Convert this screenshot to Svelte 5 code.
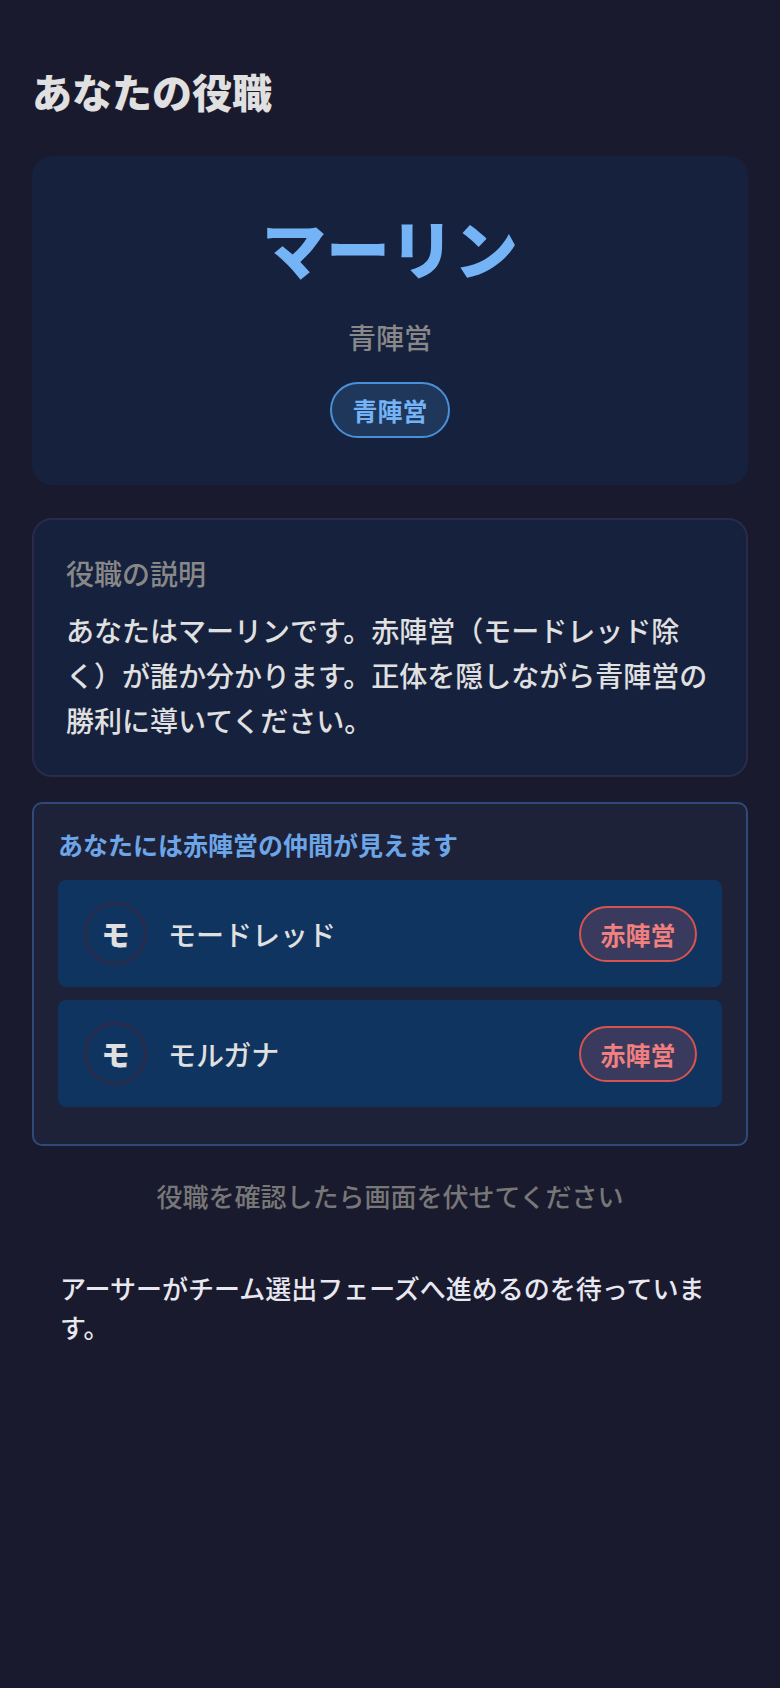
<script lang="ts">
  let allies = [
    { name: 'モードレッド', initial: 'モ', team: '赤陣営' },
    { name: 'モルガナ', initial: 'モ', team: '赤陣営' }
  ];
</script>

<div class="screen">
  <h1 class="page-title">あなたの役職</h1>

  <div class="role-card">
    <div class="role-name">マーリン</div>
    <div class="role-team">青陣営</div>
    <span class="badge blue">青陣営</span>
  </div>

  <div class="desc-card">
    <div class="desc-title">役職の説明</div>
    <p class="desc-text">あなたはマーリンです。赤陣営（モードレッド除く）が誰か分かります。正体を隠しながら青陣営の勝利に導いてください。</p>
  </div>

  <div class="allies">
    <div class="allies-title">あなたには赤陣営の仲間が見えます</div>
    {#each allies as ally}
      <div class="ally-row">
        <div class="avatar">{ally.initial}</div>
        <div class="ally-name">{ally.name}</div>
        <span class="badge red">{ally.team}</span>
      </div>
    {/each}
  </div>

  <p class="hint">役職を確認したら画面を伏せてください</p>
  <p class="waiting">アーサーがチーム選出フェーズへ進めるのを待っています。</p>
</div>

<style>
  :global(body) {
    background-color: #1a1a2e;
  }

  .screen {
    min-height: 1688px;
    box-sizing: border-box;
    padding: 61px 32px 0;
    background-color: #1a1a2e;
    color: #e0e0e0;
    font-family: "Noto Sans CJK JP", "Noto Sans", sans-serif;
  }

  .page-title {
    margin: 0 0 35px;
    font-size: 40px;
    line-height: 60px;
    font-weight: 900;
    color: #e0e0e0;
  }

  .role-card {
    display: flex;
    flex-direction: column;
    align-items: center;
    height: 329px;
    box-sizing: border-box;
    padding-top: 42px;
    background-color: #16213e;
    border-radius: 20px;
    margin-bottom: 33px;
  }

  .role-name {
    font-size: 64px;
    line-height: 96px;
    font-weight: 900;
    color: #74b3f5;
    margin-bottom: 22px;
  }

  .role-team {
    font-size: 28px;
    line-height: 42px;
    font-weight: 500;
    color: #888;
    margin-bottom: 24px;
  }

  .badge {
    display: inline-block;
    padding: 8px 20.5px;
    font-size: 25px;
    line-height: 36px;
    font-weight: 700;
    border-radius: 28px;
    border: 2px solid;
  }

  .badge.blue {
    background-color: rgba(74, 144, 217, 0.2);
    border-color: #4a90d9;
    color: #74b3f5;
  }

  .badge.red {
    padding: 8px 19.5px;
    background-color: rgba(224, 85, 85, 0.2);
    border-color: #d9534f;
    color: #f08080;
  }

  .desc-card {
    box-sizing: border-box;
    height: 259px;
    padding: 32px;
    background-color: #16213e;
    border: 2px solid #2a2a4a;
    border-radius: 20px;
    margin-bottom: 25px;
  }

  .desc-title {
    font-size: 28px;
    line-height: 42px;
    font-weight: 500;
    color: #888;
    margin-bottom: 14px;
  }

  .desc-text {
    margin: 0;
    font-size: 28px;
    line-height: 45px;
    font-weight: 500;
  }

  .allies {
    box-sizing: border-box;
    height: 344px;
    padding: 24px;
    background-color: #1e2238;
    border: 2px solid #2f4a7a;
    border-radius: 10px;
    margin-bottom: 25px;
  }

  .allies-title {
    font-size: 25px;
    line-height: 32px;
    font-weight: 700;
    color: #6ca6e8;
    margin-bottom: 20px;
  }

  .ally-row {
    display: flex;
    align-items: center;
    height: 107px;
    box-sizing: border-box;
    padding: 0 25px 0 26px;
    background-color: #0f3460;
    border-radius: 8px;
    margin-bottom: 13px;
  }

  .avatar {
    display: flex;
    align-items: center;
    justify-content: center;
    width: 63px;
    height: 63px;
    box-sizing: border-box;
    border: 3px solid #2a2a4a;
    border-radius: 50%;
    font-size: 28px;
    font-weight: 900;
    margin-right: 21px;
  }

  .ally-name {
    flex: 1;
    font-size: 28px;
    line-height: 42px;
    font-weight: 500;
  }

  .hint {
    margin: 0 0 47px;
    text-align: center;
    font-size: 26px;
    line-height: 50px;
    font-weight: 500;
    color: #777;
  }

  .waiting {
    margin: 0;
    padding: 0 28px;
    font-size: 26px;
    line-height: 39px;
    font-weight: 500;
    color: #e8e8f0;
  }
</style>
